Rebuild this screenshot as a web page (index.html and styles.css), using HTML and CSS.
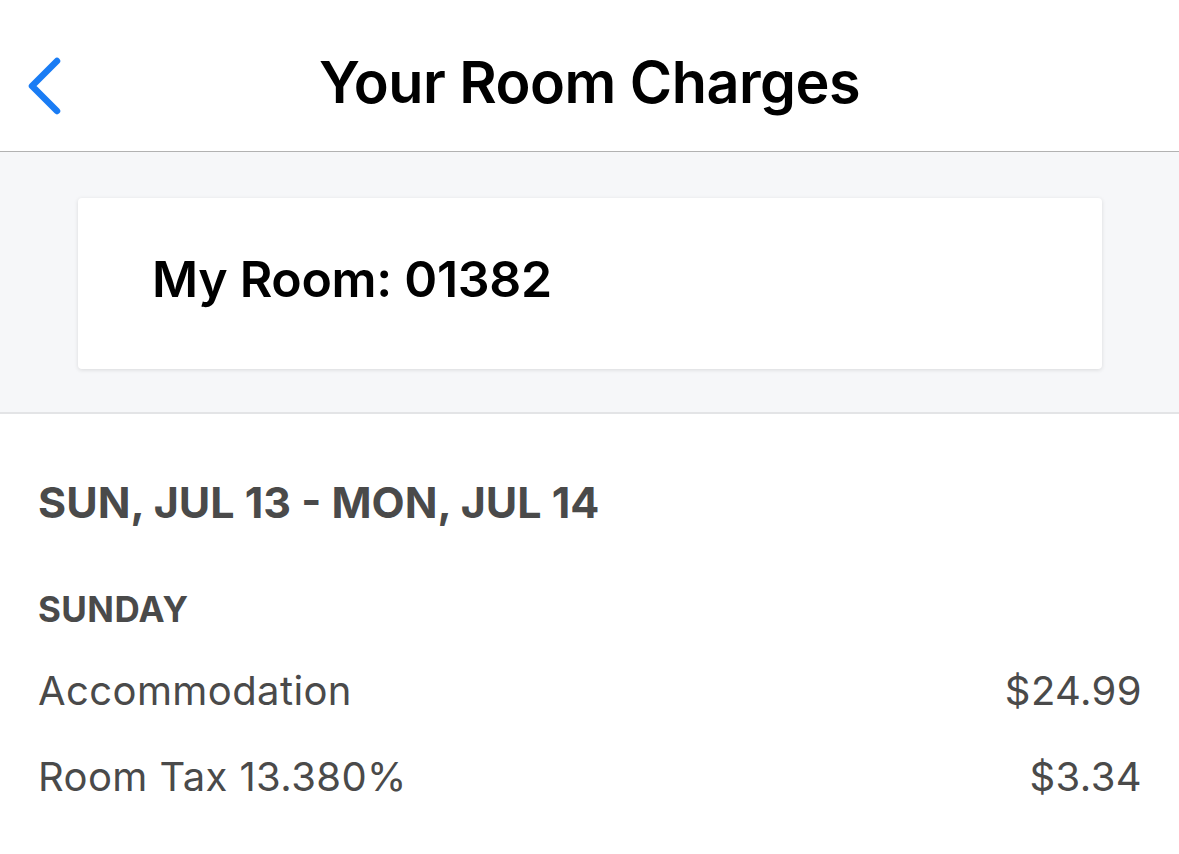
FILE: index.html
```html
<!DOCTYPE html>
<html lang="en">
<head>
    <meta charset="UTF-8">
    <meta name="viewport" content="width=device-width, initial-scale=1.0">
    <title>Your Room Charges</title>
    <link rel="stylesheet" href="styles.css">
</head>
<body>
    <div class="nav-bar">
        <button class="back-btn" aria-label="Back">
            <svg width="40" height="60" viewBox="0 0 40 60">
                <path d="M31 4 L6 29 L31 54" fill="none" stroke="#1a7cf4" stroke-width="6.5" stroke-linecap="round" stroke-linejoin="round"/>
            </svg>
        </button>
        <h1 class="nav-title">Your Room Charges</h1>
    </div>

    <div class="room-section">
        <div class="room-card">
            <span class="room-label">My Room: 01382</span>
        </div>
    </div>

    <div class="charges">
        <div class="date-range">SUN, JUL 13 - MON, JUL 14</div>
        <div class="day-group">
            <div class="day-name">SUNDAY</div>
            <ul class="charge-list">
                <li>
                    <span>Accommodation</span>
                    <span>$24.99</span>
                </li>
                <li>
                    <span>Room Tax 13.380%</span>
                    <span>$3.34</span>
                </li>
            </ul>
        </div>
    </div>
</body>
</html>
```

FILE: styles.css
```css
* {
    margin: 0;
    padding: 0;
    box-sizing: border-box;
}

body {
    font-family: Inter, 'Noto Sans', sans-serif;
    background: #fff;
    color: #000;
    width: 1179px;
    height: 854px;
    overflow: hidden;
}

.nav-bar {
    height: 152px;
    display: flex;
    align-items: center;
    justify-content: center;
    position: relative;
    border-bottom: 1px solid #b2b2b2;
    background: #fff;
}

.back-btn {
    position: absolute;
    left: 26px;
    top: 57px;
    background: none;
    border: none;
    cursor: pointer;
    display: flex;
}

.nav-title {
    font-size: 57.5px;
    font-weight: 600;
    letter-spacing: -0.5px;
    padding-top: 12px;
}

.room-section {
    background: #f6f7f9;
    padding: 46px 77px 43px 78px;
    border-bottom: 2px solid #e3e4e6;
}

.room-card {
    background: #fff;
    height: 171px;
    border-radius: 4px;
    box-shadow: 0 1px 4px rgba(0, 0, 0, 0.12);
    display: flex;
    align-items: center;
    padding: 0 74px 10px;
}

.room-label {
    font-size: 50px;
    font-weight: 600;
    letter-spacing: -0.3px;
}

.charges {
    padding: 62px 37px 0 38px;
    color: #4a4a4a;
}

.date-range {
    font-size: 43px;
    font-weight: 700;
    margin-bottom: 60px;
}

.day-name {
    font-size: 35px;
    font-weight: 700;
    letter-spacing: 0.4px;
    margin-bottom: 17px;
}

.charge-list {
    list-style: none;
}

.charge-list li {
    display: flex;
    justify-content: space-between;
    font-size: 40px;
    font-weight: 400;
    letter-spacing: 0.4px;
    height: 86px;
    align-items: center;
}
```
